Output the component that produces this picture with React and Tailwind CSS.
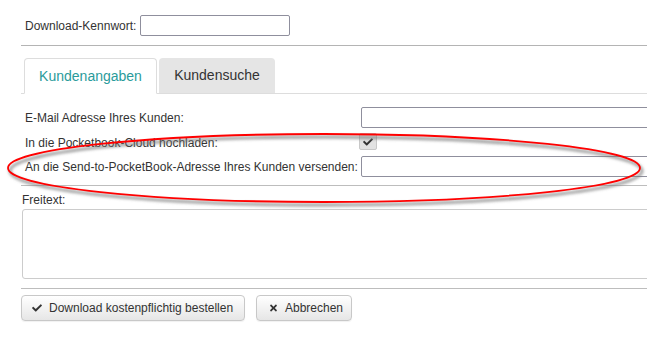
import React from "react";
import { FaCheck, FaTimes } from "react-icons/fa";

export default function App() {
  return (
    <div className="relative w-[647px] h-[351px] overflow-hidden bg-white text-[12px] text-[#333] font-['Liberation_Sans',Arial,sans-serif]">
      <div className="ml-[21px] w-[660px]">
        {/* Download password row */}
        <div className="flex items-center h-[21px] mt-[15px] pl-[4px]">
          <span className="leading-none">Download-Kennwort:</span>
          <input className="ml-[4px] w-[150px] h-[21px] border border-[#8f8f9d] rounded-[2px] bg-white" />
        </div>
        <div className="mt-[9px] border-t border-[#b4b4b4]" />

        {/* Tabs */}
        <div className="mt-[12px] flex gap-[2px] pl-[3px] border-b border-[#dddddd] h-[36px]">
          <div className="h-[36px] w-[133px] border border-[#dddddd] border-b-white rounded-t-[4px] bg-white flex items-center justify-center text-[14px] text-[#2a9b9b]">
            Kundenangaben
          </div>
          <div className="h-[35px] w-[116px] rounded-t-[4px] bg-[#e5e5e5] flex items-center justify-center text-[14px] text-[#333]">
            Kundensuche
          </div>
        </div>

        {/* Form rows */}
        <div className="mt-[13px] pl-[4px]">
          <div className="flex items-center h-[21px]">
            <span className="w-[336px] leading-none">E-Mail Adresse Ihres Kunden:</span>
            <input className="flex-1 h-[21px] border border-[#8f8f9d] rounded-[2px] bg-white" />
          </div>
          <div className="flex items-center h-[19px] mt-[4px]">
            <span className="w-[334px] leading-none pt-[3px]">In die Pocketbook-Cloud hochladen:</span>
            <div className="w-[18px] h-[17px] rounded-[2px] border border-[#c8c8c8] bg-[#e2e2e2] flex items-center justify-center">
              <FaCheck className="w-[10px] h-[10px] text-[#333]" />
            </div>
          </div>
          <div className="flex items-center h-[21px] mt-[5px]">
            <span className="w-[336px] leading-none">An die Send-to-PocketBook-Adresse Ihres Kunden versenden:</span>
            <input className="flex-1 h-[21px] border border-[#8f8f9d] rounded-[2px] bg-white" />
          </div>
        </div>
        <div className="mt-[8px] border-t border-[#bdbdbd]" />

        {/* Freitext */}
        <div className="pl-[1px] mt-[8px] leading-none">Freitext:</div>
        <textarea className="block ml-[1px] mt-[3px] w-[650px] h-[70px] border border-[#cccccc] rounded-[3px] bg-white resize-none" />
        <div className="mt-[9px] border-t border-[#bdbdbd]" />

        {/* Buttons */}
        <div className="mt-[6px] flex gap-[11px]">
          <button className="h-[26px] w-[224px] flex items-center gap-[7px] pl-[10px] border border-[#c8c8c8] rounded-[4px] bg-gradient-to-b from-white to-[#e6e6e6] shadow-[0_1px_1px_rgba(0,0,0,0.06)] text-[12px] text-[#333]">
            <FaCheck className="w-[10px] h-[10px] text-[#333]" />
            <span>Download kostenpflichtig bestellen</span>
          </button>
          <button className="h-[26px] w-[96px] flex items-center gap-[7px] pl-[12px] border border-[#c8c8c8] rounded-[4px] bg-gradient-to-b from-white to-[#e6e6e6] shadow-[0_1px_1px_rgba(0,0,0,0.06)] text-[12px] text-[#333]">
            <FaTimes className="w-[9px] h-[10px] text-[#333]" />
            <span>Abbrechen</span>
          </button>
        </div>
      </div>

      {/* Red annotation ellipse */}
      <svg className="absolute left-0 top-0 pointer-events-none" width="647" height="351" viewBox="0 0 647 351">
        <defs>
          <filter id="blur" x="-10%" y="-50%" width="120%" height="200%">
            <feGaussianBlur stdDeviation="1.6" />
          </filter>
        </defs>
        <ellipse cx="326" cy="171" rx="316" ry="34" fill="none" stroke="#777" strokeOpacity="0.75" strokeWidth="2.8" filter="url(#blur)" />
        <ellipse cx="324" cy="168" rx="316" ry="34" fill="none" stroke="#ff0000" strokeWidth="1.8" />
      </svg>
    </div>
  );
}
